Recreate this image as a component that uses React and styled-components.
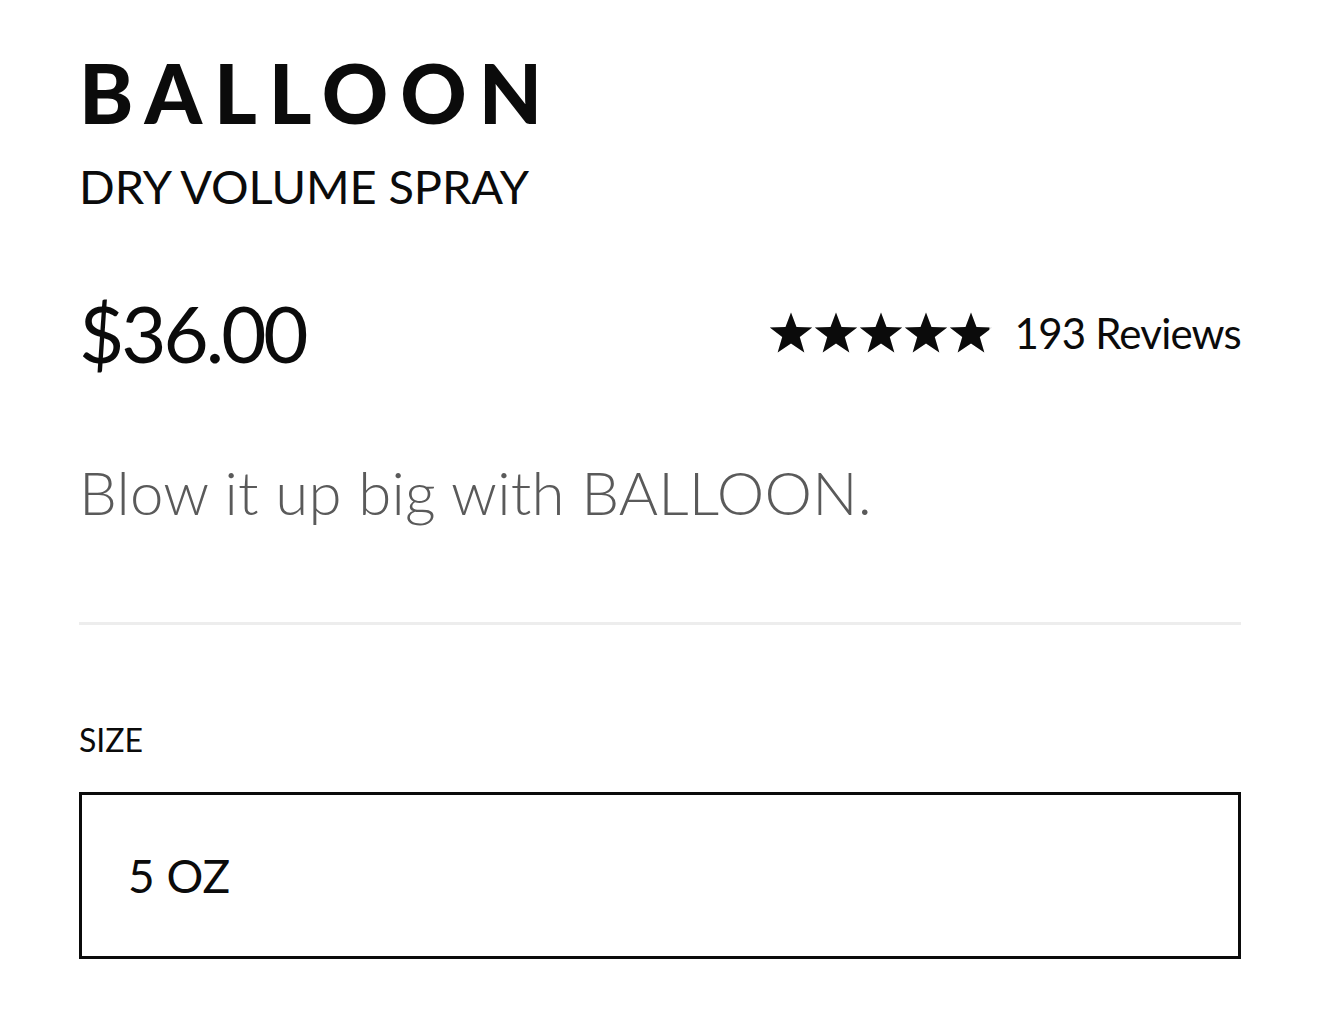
import React from 'react'
import styled, { createGlobalStyle } from "styled-components"

const GlobalStyle = createGlobalStyle`
  body {
    margin: 0;
    background: #fff;
    font-family: Lato, "Open Sans", sans-serif;
    color: #0b0b0b;
  }
`

const Container = styled.div`
  width: 1320px;
  height: 1020px;
  padding: 50px 79px 0 79px;
  box-sizing: border-box;
  display: flex;
  flex-direction: column;
`

const Title = styled.h1`
  margin: 0;
  font-size: 82px;
  font-weight: 900;
  letter-spacing: 12px;
  line-height: 84px;
`

const Subtitle = styled.h2`
  margin: 24px 0 0 0;
  font-size: 47px;
  font-weight: 400;
  line-height: 56px;
  letter-spacing: -0.1px;
`

const PriceRow = styled.div`
  margin-top: 74px;
  display: flex;
  justify-content: space-between;
  align-items: center;
`

const Price = styled.div`
  font-size: 78px;
  font-weight: 400;
  line-height: 90px;
  letter-spacing: -3px;
`

const Rating = styled.div`
  display: flex;
  align-items: center;
  gap: 22px;
`

const Stars = styled.div`
  display: flex;
  gap: 1px;
`

const Reviews = styled.span`
  font-size: 42px;
  font-weight: 400;
  letter-spacing: -0.8px;
`

const Tagline = styled.p`
  margin: 74px 0 0 0;
  font-size: 60px;
  font-weight: 300;
  color: #5a5a5a;
  line-height: 80px;
  letter-spacing: 0.2px;
`

const Divider = styled.hr`
  margin: 90px 0 0 0;
  border: none;
  height: 3px;
  background: #ededed;
`

const Label = styled.div`
  margin-top: 95px;
  font-size: 32px;
  font-weight: 400;
  line-height: 40px;
`

const Select = styled.div`
  margin-top: 32px;
  height: 167px;
  border: 3px solid #0b0b0b;
  box-sizing: border-box;
  display: flex;
  align-items: center;
  padding-left: 46px;
  font-size: 46px;
  font-weight: 400;
`

const STAR = "12,0.3 15,8.2 23.6,8.5 16.8,13.7 19.3,22.2 12,17.3 4.7,22.2 7.2,13.7 0.4,8.5 9,8.2"

const Star = ({ fill = 1 }) => (
  <svg width="44" height="42" viewBox="0 0 24 23">
    <defs>
      <clipPath id={`c${fill}`}>
        <rect x="0" y="0" width={24 * fill} height="23" />
      </clipPath>
    </defs>
    <polygon points={STAR} fill="#ddd" />
    <polygon points={STAR} fill="#0b0b0b" clipPath={`url(#c${fill})`} />
  </svg>
)

const App = () => {
  return (
    <>
      <GlobalStyle />
      <Container>
        <Title>BALLOON</Title>
        <Subtitle>DRY VOLUME SPRAY</Subtitle>
        <PriceRow>
          <Price>$36.00</Price>
          <Rating>
            <Stars>
              {[1, 1, 1, 1, 0.92].map((f, i) => (
                <Star key={i} fill={f} />
              ))}
            </Stars>
            <Reviews>193 Reviews</Reviews>
          </Rating>
        </PriceRow>
        <Tagline>Blow it up big with BALLOON.</Tagline>
        <Divider />
        <Label>SIZE</Label>
        <Select>5 OZ</Select>
      </Container>
    </>
  )
}

export default App
